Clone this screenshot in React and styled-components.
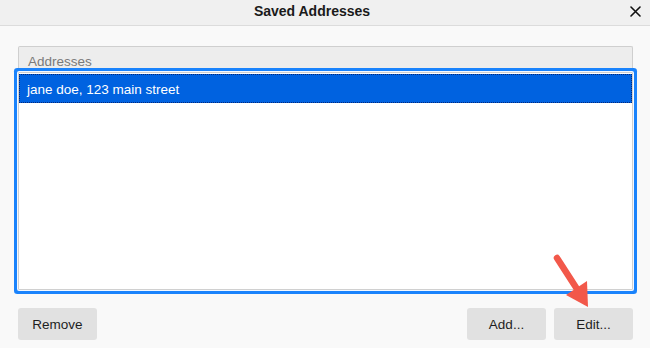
import styled, { createGlobalStyle } from "styled-components";

const GlobalStyle = createGlobalStyle`
	html, body {
		margin: 0;
		padding: 0;
		background: #f9f9f9;
		font-family: "Liberation Sans", Arial, sans-serif;
	}
`;

export default function App() {
	const addresses = ["jane doe, 123 main street"];

	return (
		<Dialog>
			<GlobalStyle />
			<TitleBar>
				<Title>Saved Addresses</Title>
				<CloseBtn aria-label="Close">
					<svg width="11" height="11" viewBox="0 0 11 11">
						<path
							d="M1 1 L10 10 M10 1 L1 10"
							stroke="#111"
							strokeWidth="1.6"
							strokeLinecap="round"
						/>
					</svg>
				</CloseBtn>
			</TitleBar>
			<Body>
				<ListHeader>Addresses</ListHeader>
				<ListBox>
					{addresses.map((item, i) => (
						<ListItem key={item} selected={i === 0}>
							{item}
						</ListItem>
					))}
				</ListBox>
				<Footer>
					<Button>Remove</Button>
					<Spacer />
					<Button>Add...</Button>
					<Button>Edit...</Button>
				</Footer>
			</Body>
			<Arrow width="40" height="56" viewBox="0 0 40 56">
				<line
					x1="5"
					y1="5"
					x2="25"
					y2="36"
					stroke="#f2584a"
					strokeWidth="6.5"
					strokeLinecap="round"
				/>
				<polygon points="14,42 35,28 36,54" fill="#f2584a" />
			</Arrow>
		</Dialog>
	);
}

const Dialog = styled.div`
	position: relative;
	width: 650px;
	height: 348px;
	background: #f9f9f9;
	overflow: hidden;
`;

const TitleBar = styled.div`
	display: flex;
	align-items: center;
	height: 25px;
	background: #f0f0f0;
	border-bottom: 1px solid #dcdcdc;
`;

const Title = styled.div`
	flex: 1;
	text-align: center;
	font-size: 14px;
	font-weight: bold;
	color: #1a1a1a;
	padding: 0 0 3px 2px;
`;

const CloseBtn = styled.button`
	width: 26px;
	height: 25px;
	padding: 0 0 3px 0;
	margin-right: 2px;
	border: none;
	background: transparent;
	display: flex;
	align-items: center;
	justify-content: center;
`;

const Body = styled.div`
	padding: 20px 17px 0 18px;
`;

const ListHeader = styled.div`
	height: 25px;
	box-sizing: border-box;
	padding: 6.5px 0 0 9px;
	background: #ededed;
	border: 1px solid #cfcfcf;
	border-bottom: none;
	border-radius: 2px 2px 0 0;
	font-size: 13.5px;
	color: #7a7a7a;
`;

const ListBox = styled.div`
	height: 218px;
	box-sizing: border-box;
	margin-top: 1px;
	padding: 1px 0 0 0;
	background: #ffffff;
	border: 1px solid #d0d0d0;
	border-radius: 1px;
	box-shadow: 0 0 0 1px #f4f8ff, 0 0 0 4px #1a83fc;
`;

const ListItem = styled.div`
	height: 29px;
	box-sizing: border-box;
	padding: 7px 0 0 7px;
	font-size: 13.5px;
	color: ${(props) => (props.selected ? "#ffffff" : "#1a1a1a")};
	background: ${(props) => (props.selected ? "#0062e0" : "transparent")};
	border: 1px dotted ${(props) => (props.selected ? "#06297a" : "transparent")};
`;

const Footer = styled.div`
	display: flex;
	gap: 8px;
	margin-top: 18px;
`;

const Spacer = styled.div`
	flex: 1;
`;

const Button = styled.button`
	width: 79px;
	height: 32px;
	border: none;
	border-radius: 3px;
	background: #e1e1e1;
	font-family: "Liberation Sans", Arial, sans-serif;
	font-size: 13.5px;
	color: #1e1e1e;
	padding: 0;
`;

const Arrow = styled.svg`
	position: absolute;
	left: 552px;
	top: 253px;
`;
